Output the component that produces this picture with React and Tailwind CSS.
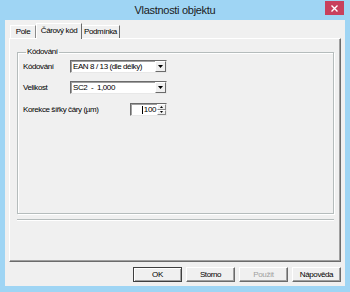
import React from 'react';

const sunken =
  'border border-t-[#6b6b6b] border-l-[#6b6b6b] border-b-[#e8e8e8] border-r-[#e8e8e8] shadow-[inset_1px_1px_0_#a0a0a0]';

function Select({ value }) {
  return (
    <div className={`flex-1 h-[13px] bg-white flex items-stretch ${sunken}`}>
      <div className="flex-1 pl-[2px] flex items-center leading-none whitespace-pre">{value}</div>
      <div className="w-[11px] bg-[#f0f0f0] border border-t-white border-l-white border-b-[#6b6b6b] border-r-[#6b6b6b] flex items-center justify-center">
        <svg width="5" height="3" viewBox="0 0 5 3">
          <path d="M0 0h5L2.5 3z" fill="#000" />
        </svg>
      </div>
    </div>
  );
}

function Spin({ value }) {
  return (
    <div className={`w-[37px] h-[13px] bg-white flex items-stretch ${sunken}`}>
      <div className="flex-1 flex items-center justify-end pr-[1px] leading-none">
        <span className="w-px h-[8px] bg-black mr-[1px]" />
        {value}
      </div>
      <div className="w-[9px] flex flex-col">
        <div className="flex-1 bg-[#f0f0f0] border border-t-white border-l-white border-b-[#8a8a8a] border-r-[#8a8a8a] flex items-center justify-center">
          <svg width="3" height="2" viewBox="0 0 3 2">
            <path d="M1.5 0L3 2H0z" fill="#000" />
          </svg>
        </div>
        <div className="flex-1 bg-[#f0f0f0] border border-t-white border-l-white border-b-[#8a8a8a] border-r-[#8a8a8a] flex items-center justify-center">
          <svg width="3" height="2" viewBox="0 0 3 2">
            <path d="M0 0h3L1.5 2z" fill="#000" />
          </svg>
        </div>
      </div>
    </div>
  );
}

function Button({ label, primary, disabled }) {
  return (
    <button
      className={`w-[49px] h-[15px] bg-[#f0f0f0] flex items-center justify-center leading-none ${
        primary
          ? 'border border-[#3f3f3f] shadow-[inset_1px_1px_0_#fff,inset_-1px_-1px_0_#a0a0a0]'
          : 'border border-t-white border-l-white border-b-[#6b6b6b] border-r-[#6b6b6b] shadow-[inset_-1px_-1px_0_#a0a0a0]'
      } ${disabled ? 'text-[#a0a0a0]' : 'text-black'}`}
    >
      {label}
    </button>
  );
}

export default function App() {
  return (
    <div className="w-[350px] h-[292px] bg-[#9fd5f4] flex flex-col overflow-hidden font-['Liberation_Sans',Arial,sans-serif] text-[8px] tracking-[-0.4px] text-black">
      {/* title bar */}
      <div className="h-[20px] grid grid-cols-[1fr_auto_1fr]">
        <div />
        <div className="pt-[3px] text-[11px] tracking-[-0.3px] leading-[14px] text-[#1b1b1b]">Vlastnosti objektu</div>
        <div className="flex justify-end items-start pr-[6px] pt-[1px]">
          <div className="w-[19px] h-[14px] bg-[#c8405c] flex items-center justify-center">
            <svg width="7" height="7" viewBox="0 0 7 7">
              <path d="M0.5 0.5l6 6M6.5 0.5l-6 6" stroke="#fff" strokeWidth="1.4" />
            </svg>
          </div>
        </div>
      </div>

      {/* client */}
      <div className="flex-1 mx-[5px] mb-[6px] bg-[#f0f0f0] flex flex-col px-[4px] pt-[3px] pb-[4px]">
        {/* tabs */}
        <div className="h-[15px] flex items-end pl-[1px]">
          <div className="w-[26px] h-[13px] border-t border-l border-white border-r border-r-[#8a8a8a] flex items-center justify-center leading-none pb-[1px]">
            Pole
          </div>
          <div className="relative z-10 -mb-px w-[46px] h-[16px] bg-[#f0f0f0] border-t border-l border-white border-r border-r-[#6b6b6b] flex items-center justify-center leading-none pb-[2px]">
            Čárový kód
          </div>
          <div className="w-[38px] h-[13px] border-t border-white border-r border-r-[#6b6b6b] flex items-center justify-center leading-none pb-[1px]">
            Podmínka
          </div>
        </div>

        {/* panel */}
        <div className="flex-1 border border-t-white border-l-white border-b-[#6b6b6b] border-r-[#6b6b6b] shadow-[inset_-1px_-1px_0_#a0a0a0] pt-[8px] pl-[7px] pr-[6px] flex flex-col">
          <fieldset className="h-[167px] border border-[#b5bcbc] shadow-[inset_1px_1px_0_#fff,1px_1px_0_#fff] pl-[5px]">
            <legend className="ml-[3px] px-[1px] leading-[10px]">Kódování</legend>
            <div className="w-[144px] flex flex-col gap-[8px] pt-[3px]">
              <div className="flex items-center">
                <div className="w-[47px]">Kódování</div>
                <Select value="EAN 8 / 13 (dle délky)" />
              </div>
              <div className="flex items-center">
                <div className="w-[47px]">Velikost</div>
                <Select value="SC2  -  1,000" />
              </div>
              <div className="flex items-center mt-[1px]">
                <div className="flex-1">Korekce šířky čáry (µm)</div>
                <Spin value="100" />
              </div>
            </div>
          </fieldset>
          <div className="mt-[5px] h-px bg-[#b5bcbc] shadow-[0_1px_0_#fff]" />
        </div>

        {/* buttons */}
        <div className="mt-[5px] flex justify-end gap-[4px]">
          <Button label="OK" primary />
          <Button label="Storno" />
          <Button label="Použít" disabled />
          <Button label="Nápověda" />
        </div>
      </div>
    </div>
  );
}
